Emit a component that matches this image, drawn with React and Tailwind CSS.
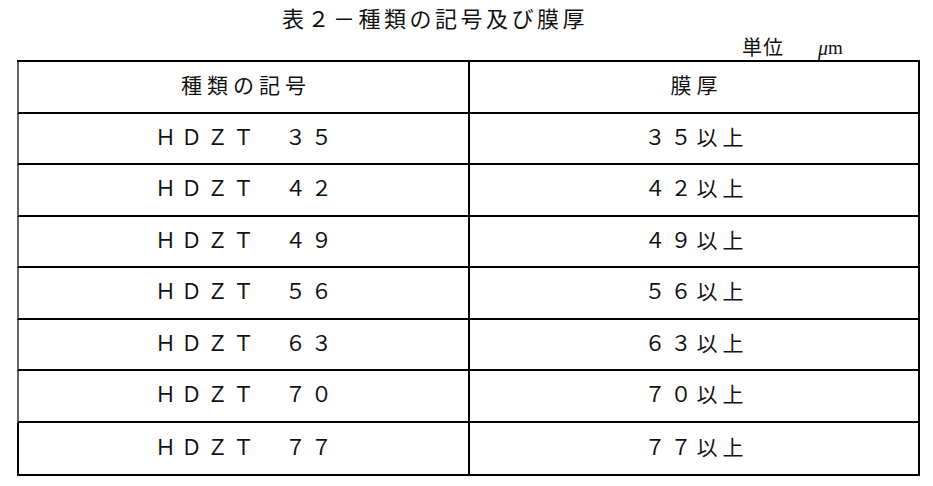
export default function App() {
  const rows = [
    ["ＨＤＺＴ　３５", "３５以上"],
    ["ＨＤＺＴ　４２", "４２以上"],
    ["ＨＤＺＴ　４９", "４９以上"],
    ["ＨＤＺＴ　５６", "５６以上"],
    ["ＨＤＺＴ　６３", "６３以上"],
    ["ＨＤＺＴ　７０", "７０以上"],
    ["ＨＤＺＴ　７７", "７７以上"],
  ];
  const font = { fontFamily: '"Liberation Serif", "Noto Sans CJK JP", serif' };
  const cell = "flex items-center justify-center text-[21px] tracking-[5px] pl-[5px]";
  return (
    <div className="w-[933px] h-[486px] bg-white text-[#111] relative" style={font}>
      <div className="h-[38px] flex items-center pl-[282px] text-[22px] tracking-[3.5px] leading-none pt-[2px]">
        表２－種類の記号及び膜厚
      </div>
      <div className="h-[22px] flex items-start pl-[742px] text-[20px] leading-none">
        <span className="tracking-[1px]">単位</span>
        <span className="ml-[34px] italic">μ</span>
        <span className="text-[19px]">m</span>
      </div>
      <div className="ml-[17px] w-[903px] border-y-2 border-r-2 border-black">
        <div className="grid grid-cols-[451px_1fr] h-[51.5px] border-b-2 border-b-black border-l-2 border-l-[#666]">
          <div className={"border-r-2 border-black " + cell}>種類の記号</div>
          <div className={cell}>膜厚</div>
        </div>
        {rows.map((r, i) => {
          const last = i === rows.length - 1;
          return (
            <div
              key={i}
              className={
                "grid grid-cols-[451px_1fr] h-[51.5px] border-l-2 " +
                (last ? "border-l-black" : "border-b-2 border-b-black border-l-[#666]")
              }
            >
              <div className={"border-r-2 border-black " + cell}>{r[0]}</div>
              <div className={cell}>{r[1]}</div>
            </div>
          );
        })}
      </div>
    </div>
  );
}
